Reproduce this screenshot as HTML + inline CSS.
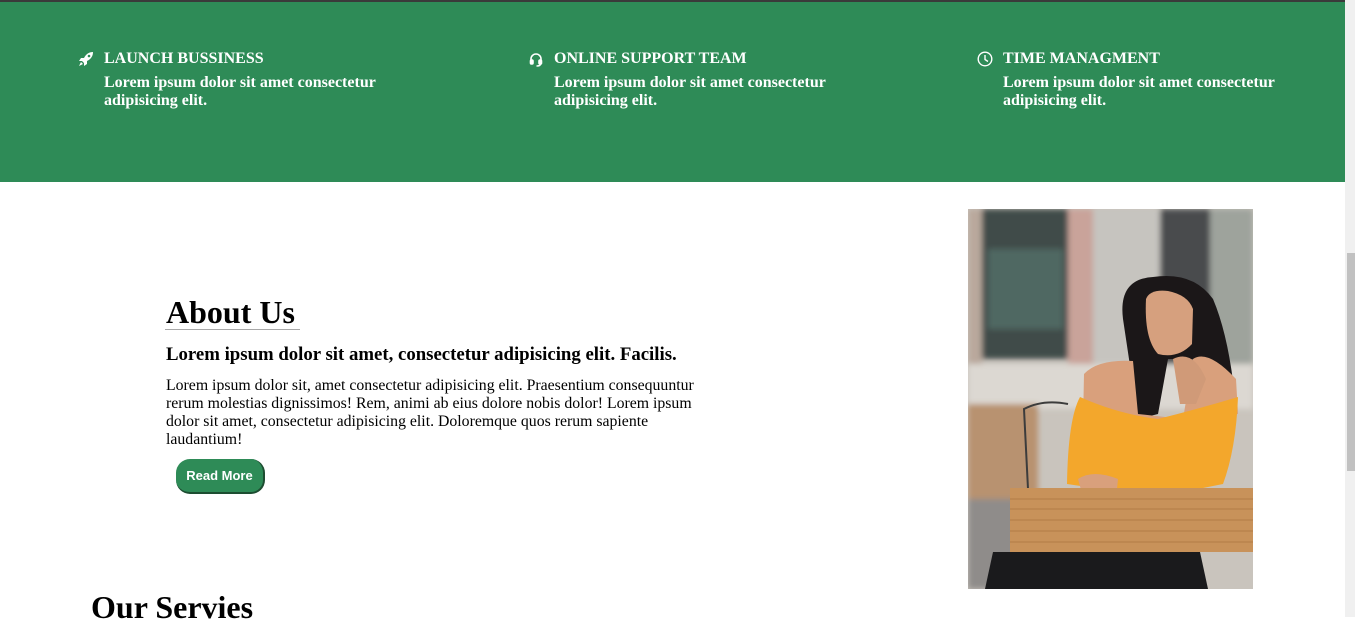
<!DOCTYPE html>
<html><head><meta charset="utf-8"><style>
*{margin:0;padding:0;box-sizing:border-box}
body{width:1355px;height:617px;overflow:hidden;background:#fff;font-family:"Liberation Serif",serif;position:relative}
.top{position:absolute;left:0;top:0;width:1345px;height:2px;background:#3a3a3a}
.band{position:absolute;left:0;top:2px;width:1345px;height:180px;background:#2e8b57;color:#fff}
.feat{position:absolute;top:48px}
.feat h4{font-size:16px;font-weight:bold;line-height:18px;margin-left:26px}
.feat p{font-size:16px;font-weight:bold;line-height:18px;margin-left:26px;margin-top:6px;width:300px}
.feat svg{position:absolute;left:0;top:1px}
h2{position:absolute;left:166px;top:294px;font-size:32px;font-weight:bold;line-height:36px}
.ul{position:absolute;left:165px;top:329px;width:135px;height:1px;background:#a8a8a8}
h3{position:absolute;left:166px;top:345px;font-size:18.8px;font-weight:bold;line-height:20px;white-space:nowrap}
.txt{position:absolute;left:166px;top:377px;width:555px;font-size:15.8px;line-height:18px}
.btn{position:absolute;left:176px;top:459px;width:89px;height:35px;background:#2e8b57;border-radius:14px;border-right:2px solid #1d4d31;border-bottom:2px solid #1d4d31;color:#fff;font-family:"Liberation Sans",sans-serif;font-weight:bold;font-size:13px;line-height:33px;text-align:center}
.serv{position:absolute;left:91px;top:589px;font-size:32px;font-weight:bold;line-height:36px}
.photo{position:absolute;left:968px;top:209px}
.sb{position:absolute;left:1345px;top:0;width:10px;height:617px;background:#f0f0f0}
.thumb{position:absolute;left:1347px;top:253px;width:8px;height:218px;background:#c1c1c1}
</style></head><body>
<div class="top"></div>
<div class="band">
 <div class="feat" style="left:78px">
  <svg width="16" height="16" viewBox="0 0 16 16"><path d="M15 1c-4 0-7 2-9 6L3 7l-2 3 3 0 2 2 0 3 3-2 0-3c4-2 6-5 6-9z" fill="#fff"/><circle cx="11" cy="5" r="1.3" fill="#2e8b57"/><path d="M3 11l-2 4 4-2z" fill="#fff"/></svg>
  <h4>LAUNCH BUSSINESS</h4><p>Lorem ipsum dolor sit amet consectetur adipisicing elit.</p></div>
 <div class="feat" style="left:528px">
  <svg width="16" height="16" viewBox="0 0 16 16" fill="none" stroke="#fff" stroke-width="1.6"><path d="M3 10V8a5 5 0 0 1 10 0v2"/><rect x="2.5" y="9" width="2.5" height="4" rx="1" fill="#fff"/><rect x="11" y="9" width="2.5" height="4" rx="1" fill="#fff"/><path d="M12.5 13c0 1.5-2 2-4 2"/></svg>
  <h4>ONLINE SUPPORT TEAM</h4><p>Lorem ipsum dolor sit amet consectetur adipisicing elit.</p></div>
 <div class="feat" style="left:977px">
  <svg width="16" height="16" viewBox="0 0 16 16" fill="none" stroke="#fff" stroke-width="1.4"><circle cx="8" cy="8" r="6.8"/><path d="M8 4v4.5l3 2"/></svg>
  <h4>TIME MANAGMENT</h4><p>Lorem ipsum dolor sit amet consectetur adipisicing elit.</p></div>
</div>
<h2>About Us</h2><div class="ul"></div>
<h3>Lorem ipsum dolor sit amet, consectetur adipisicing elit. Facilis.</h3>
<div class="txt">Lorem ipsum dolor sit, amet consectetur adipisicing elit. Praesentium consequuntur rerum molestias dignissimos! Rem, animi ab eius dolore nobis dolor! Lorem ipsum dolor sit amet, consectetur adipisicing elit. Doloremque quos rerum sapiente laudantium!</div>
<div class="btn">Read More</div>
<div class="serv">Our Servies</div>
<svg class="photo" width="285" height="380" viewBox="0 0 285 380">
 <defs><filter id="b"><feGaussianBlur stdDeviation="3"/></filter></defs>
 <rect width="285" height="380" fill="#c9c4bd"/>
 <g filter="url(#b)">
 <rect x="0" y="0" width="14" height="160" fill="#b9a89c"/>
 <rect x="14" y="0" width="86" height="150" fill="#3f4b48"/>
 <rect x="20" y="40" width="75" height="80" fill="#4f6862"/>
 <rect x="100" y="0" width="25" height="155" fill="#c9a39a"/>
 <rect x="125" y="0" width="67" height="160" fill="#c6c4bf"/>
 <rect x="192" y="0" width="50" height="160" fill="#4a4b4d"/>
 <rect x="242" y="0" width="43" height="180" fill="#9ea39c"/>
 <rect x="0" y="155" width="285" height="45" fill="#dcd8d2"/>
 <rect x="0" y="195" width="70" height="100" fill="#b89270"/>
 <rect x="0" y="290" width="60" height="90" fill="#8f8c8a"/>
 </g>
 <path d="M60 280 L56 200 Q75 190 100 195" fill="none" stroke="#3c3c3c" stroke-width="2"/>
 <path d="M155 110 Q150 70 185 68 Q225 62 245 90 Q262 130 268 200 L250 205 L225 150 L200 150 L190 205 L170 210 Z" fill="#1b1718"/>
 <path d="M178 90 Q182 80 200 82 Q220 86 225 100 L224 135 Q210 150 190 145 Q176 130 178 90z" fill="#d6a07e"/>
 <path d="M116 165 Q130 150 165 152 L170 205 L215 210 L225 150 Q240 140 268 170 L270 205 L115 215 Z" fill="#d9a07c"/>
 <path d="M99 275 Q100 210 112 188 Q150 205 190 210 Q230 200 270 188 Q268 240 255 275 L225 281 L140 281 Z" fill="#f3a72c"/>
 <path d="M205 150 Q225 140 238 170 L228 195 L212 195 Z" fill="#d09a78"/>
 <path d="M110 270 Q125 260 150 270 L148 290 L115 288 Z" fill="#d9a07c"/>
 <rect x="42" y="279" width="243" height="64" fill="#c8925a"/>
 <g stroke="#a9733f" stroke-width="1" opacity=".7"><line x1="42" y1="290" x2="285" y2="290"/><line x1="42" y1="300" x2="285" y2="300"/><line x1="42" y1="311" x2="285" y2="311"/><line x1="42" y1="322" x2="285" y2="322"/><line x1="42" y1="333" x2="285" y2="333"/></g>
 <path d="M17 380 L25 343 L232 343 L240 380 Z" fill="#1a1a1c"/>
</svg>
<div class="sb"></div><div class="thumb"></div>
</body></html>
